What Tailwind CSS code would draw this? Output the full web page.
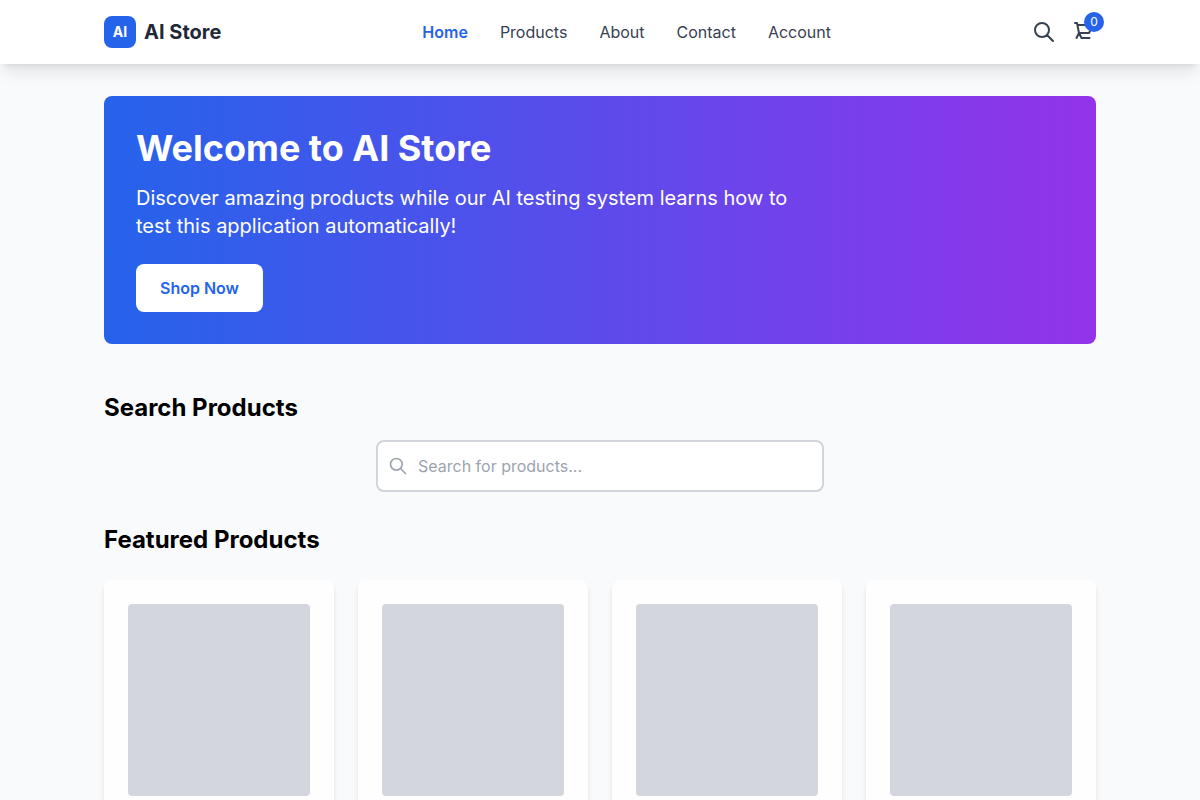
<!DOCTYPE html>
<html lang="en">
<head>
<meta charset="utf-8">
<meta name="viewport" content="width=device-width, initial-scale=1">
<title>AI Store</title>
<script src="https://cdn.jsdelivr.net/npm/@tailwindcss/browser@4"></script>
</head>
<body class="min-h-screen bg-[#f9fafb] font-['Inter',sans-serif] text-black">
<header class="relative bg-white shadow-lg">
  <div class="mx-auto flex h-16 max-w-6xl items-center justify-between px-20">
    <a href="#" class="flex items-center gap-2">
      <span class="flex size-8 items-center justify-center rounded-lg bg-[#2563eb] text-sm font-bold text-white">AI</span>
      <span class="text-xl font-bold text-[#1f2937]">AI Store</span>
    </a>
    <nav class="flex gap-8 text-[#374151]">
      <a href="#" class="font-semibold text-[#2563eb]">Home</a>
      <a href="#">Products</a>
      <a href="#">About</a>
      <a href="#">Contact</a>
      <a href="#">Account</a>
    </nav>
    <div class="flex items-center gap-4 text-[#374151]">
      <button type="button" aria-label="Search"><svg class="size-6" fill="none" stroke="currentColor" stroke-width="2" stroke-linecap="round" stroke-linejoin="round" viewBox="0 0 24 24"><path d="M21 21l-6-6m2-5a7 7 0 11-14 0 7 7 0 0114 0z"/></svg></button>
      <button type="button" aria-label="Cart" class="relative"><svg class="size-6" fill="none" stroke="currentColor" stroke-width="2" stroke-linecap="round" stroke-linejoin="round" viewBox="0 0 24 24"><path d="M3 3h2l.4 2M7 13h10l4-8H5.4m0 0L7 13m0 0l-2.500 5M7 13l2.500 5m0 0h8"/></svg><span class="absolute -top-2 -right-2 flex size-5 items-center justify-center rounded-full bg-[#2563eb] text-xs text-white">0</span></button>
    </div>
  </div>
</header>
<main class="mx-auto max-w-6xl px-20 py-8">
  <section class="rounded-lg bg-linear-to-r/srgb from-[#2563eb] to-[#9333ea] p-8 text-white">
    <h1 class="mb-4 text-4xl font-bold">Welcome to AI Store</h1>
    <p class="mb-6 max-w-2xl text-xl/7">Discover amazing products while our AI testing system learns how to test this application automatically!</p>
    <button type="button" class="rounded-lg bg-white px-6 py-3 font-semibold text-[#2563eb]">Shop Now</button>
  </section>
  <section class="mt-12">
    <h2 class="mb-4 text-2xl font-bold">Search Products</h2>
    <div class="relative mx-auto max-w-md">
      <svg class="absolute top-4 left-3 size-5 text-[#9ca3af]" fill="none" stroke="currentColor" stroke-width="2" stroke-linecap="round" stroke-linejoin="round" viewBox="0 0 24 24"><path d="M21 21l-6-6m2-5a7 7 0 11-14 0 7 7 0 0114 0z"/></svg>
      <input type="search" aria-label="Search for products" placeholder="Search for products..." class="block w-full rounded-lg border-2 border-[#d1d5db] bg-white py-3 pr-4 pl-10 placeholder:text-[#9ca3af]">
    </div>
  </section>
  <section class="mt-8">
    <h2 class="mb-6 text-2xl font-bold">Featured Products</h2>
    <div class="grid grid-cols-4 gap-6">
      <div class="rounded-lg bg-white p-6 opacity-95 shadow-md"><div class="h-48 rounded bg-[#d1d5db]"></div></div>
      <div class="rounded-lg bg-white p-6 opacity-95 shadow-md"><div class="h-48 rounded bg-[#d1d5db]"></div></div>
      <div class="rounded-lg bg-white p-6 opacity-95 shadow-md"><div class="h-48 rounded bg-[#d1d5db]"></div></div>
      <div class="rounded-lg bg-white p-6 opacity-95 shadow-md"><div class="h-48 rounded bg-[#d1d5db]"></div></div>
    </div>
  </section>
</main>
</body>
</html>
